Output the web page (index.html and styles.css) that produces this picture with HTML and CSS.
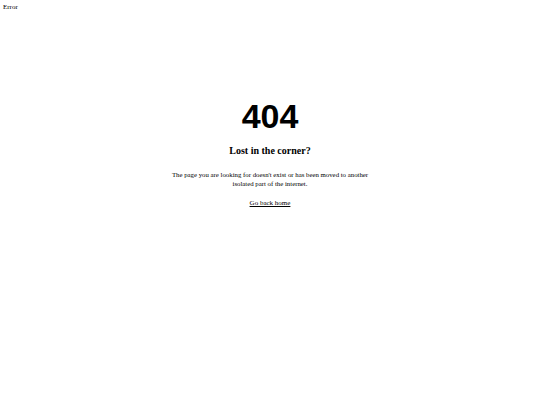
FILE: index.html
```html
<!DOCTYPE html>
<html>
<head>
<meta charset="utf-8">
<title>Error</title>
<link rel="stylesheet" href="styles.css">
</head>
<body>
<div class="label">Error</div>
<main class="wrap">
  <h1 class="code">404</h1>
  <h2 class="title">Lost in the corner?</h2>
  <p class="msg">The page you are looking for doesn't exist or has been moved to another<br>isolated part of the internet.</p>
  <a class="home" href="#">Go back home</a>
</main>
</body>
</html>
```
FILE: styles.css
```css
html, body { margin: 0; padding: 0; background: #fff; }
body { font-family: "Liberation Serif", "Times New Roman", serif; font-size: 7px; color: #000; padding: 3px 3px; }
.label { line-height: 9px; }
.wrap { display: flex; flex-direction: column; align-items: center; text-align: center; margin-top: 87px; }
.code { font-family: "Liberation Sans", Arial, sans-serif; font-weight: bold; font-size: 34px; line-height: 34px; margin: 0; }
.title { font-size: 10px; font-weight: bold; margin: 12px 0 0; line-height: 12px; }
.msg { margin: 14px 0 0; line-height: 8.5px; font-size: 6.8px; }
.home { margin-top: 11px; color: #000; text-decoration: underline; line-height: 9px; }
```
